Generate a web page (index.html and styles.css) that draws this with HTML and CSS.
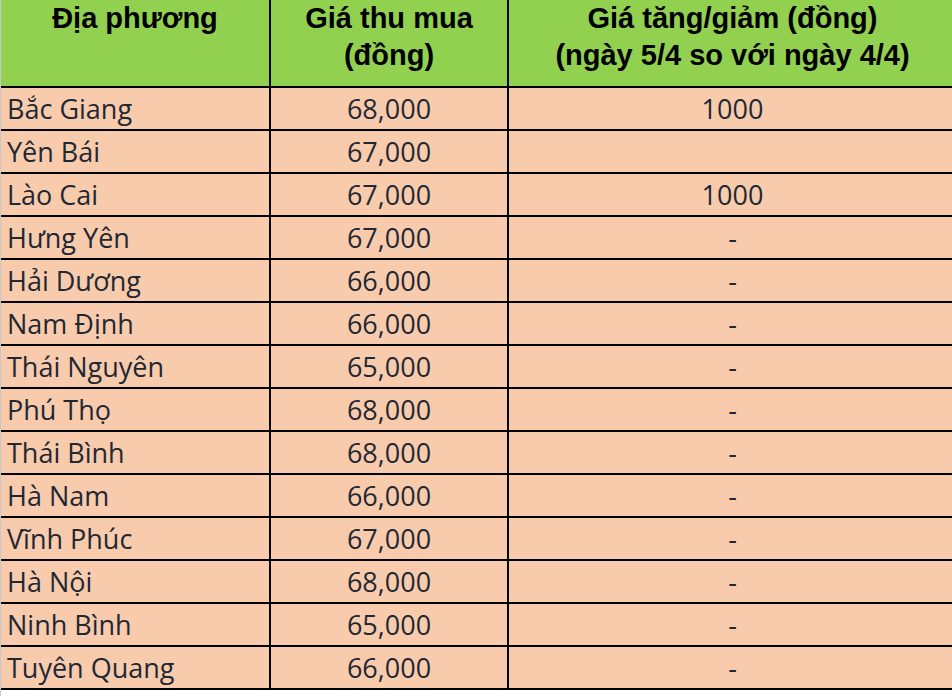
FILE: index.html
```html
<!DOCTYPE html>
<html lang="vi">
<head>
<meta charset="utf-8">
<link rel="stylesheet" href="styles.css">
</head>
<body>
<table class="price">
  <thead>
    <tr>
      <th class="c1">Địa phương</th>
      <th class="c2">Giá thu mua<br>(đồng)</th>
      <th class="c3">Giá tăng/giảm (đồng)<br>(ngày 5/4 so với ngày 4/4)</th>
    </tr>
  </thead>
  <tbody>
    <tr><td class="name">Bắc Giang</td><td class="num">68,000</td><td class="num">1000</td></tr>
    <tr><td class="name">Yên Bái</td><td class="num">67,000</td><td class="num"></td></tr>
    <tr><td class="name">Lào Cai</td><td class="num">67,000</td><td class="num">1000</td></tr>
    <tr><td class="name">Hưng Yên</td><td class="num">67,000</td><td class="num">-</td></tr>
    <tr><td class="name">Hải Dương</td><td class="num">66,000</td><td class="num">-</td></tr>
    <tr><td class="name">Nam Định</td><td class="num">66,000</td><td class="num">-</td></tr>
    <tr><td class="name">Thái Nguyên</td><td class="num">65,000</td><td class="num">-</td></tr>
    <tr><td class="name">Phú Thọ</td><td class="num">68,000</td><td class="num">-</td></tr>
    <tr><td class="name">Thái Bình</td><td class="num">68,000</td><td class="num">-</td></tr>
    <tr><td class="name">Hà Nam</td><td class="num">66,000</td><td class="num">-</td></tr>
    <tr><td class="name">Vĩnh Phúc</td><td class="num">67,000</td><td class="num">-</td></tr>
    <tr><td class="name">Hà Nội</td><td class="num">68,000</td><td class="num">-</td></tr>
    <tr><td class="name">Ninh Bình</td><td class="num">65,000</td><td class="num">-</td></tr>
    <tr><td class="name">Tuyên Quang</td><td class="num">66,000</td><td class="num">-</td></tr>
  </tbody>
</table>
</body>
</html>
```

FILE: styles.css
```css
html, body {
  margin: 0;
  padding: 0;
  background: #ffffff;
  overflow: hidden;
  width: 952px;
  height: 696px;
}
body {
  border-left: 1px solid #c8c8c8;
  box-sizing: border-box;
}
.price {
  border-collapse: collapse;
  table-layout: fixed;
  width: 958px;
  margin-left: -1px;
}
.price th, .price td {
  border: 2px solid #000000;
  padding: 0;
  overflow: hidden;
  white-space: nowrap;
}
.price th {
  background: #92d050;
  color: #000000;
  font-family: "Liberation Sans", Arial, sans-serif;
  font-weight: bold;
  font-size: 29px;
  line-height: 37px;
  height: 86px;
  vertical-align: top;
  text-align: center;
  border-top: none;
}
.price th.c1 { width: 268px; border-left: 1px solid #c8c8c8; }
.price th.c2 { width: 236px; }
.price td {
  background: #f8cbad;
  color: #1f2833;
  font-family: "Open Sans", "Noto Sans", sans-serif;
  font-size: 27px;
  height: 41px;
  line-height: 41px;
  vertical-align: middle;
}
.price td.name {
  text-align: left;
  padding-left: 6px;
  border-left: 1px solid #c8c8c8;
}
.price td.num {
  text-align: center;
}
```
